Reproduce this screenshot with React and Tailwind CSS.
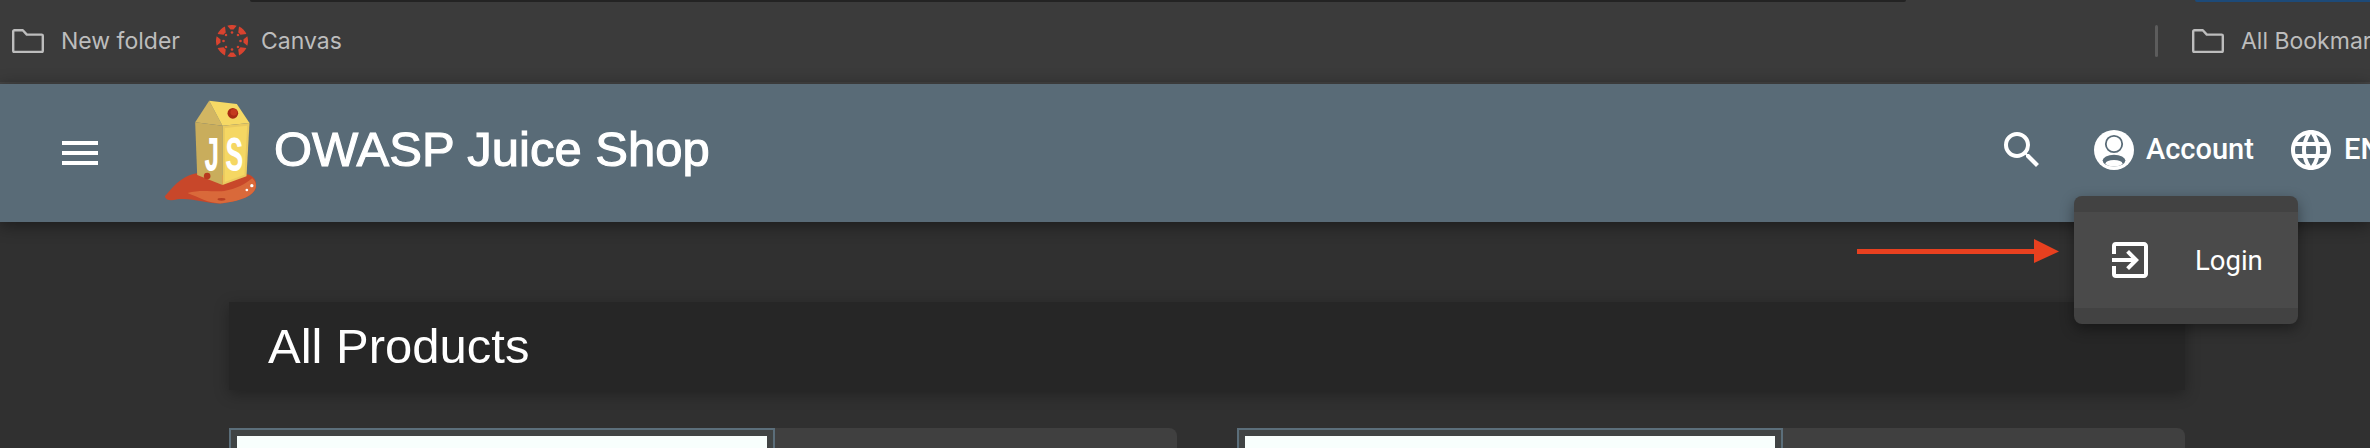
import React from 'react';
import { MdMenu, MdSearch, MdLanguage, MdExitToApp } from 'react-icons/md';

const FolderIcon = ({ className }) => (
  <svg viewBox="0 0 32 24" className={className} fill="none" stroke="#bdbdbd" strokeWidth="2.4" strokeLinejoin="round">
    <path d="M1.2 2.4 a1.2 1.2 0 0 1 1.2-1.2 h8.4 l4 4.4 h14.8 a1.2 1.2 0 0 1 1.2 1.2 v15 a1.2 1.2 0 0 1 -1.2 1.2 h-27.2 a1.2 1.2 0 0 1 -1.2-1.2 z" />
  </svg>
);

// sector of the ring, angle in degrees from north
const sector = (a, half, r1, r2) => {
  const pt = (deg, r) => {
    const t = ((deg - 90) * Math.PI) / 180;
    return `${(16 + r * Math.cos(t)).toFixed(2)} ${(16 + r * Math.sin(t)).toFixed(2)}`;
  };
  return `M${pt(a - half, r2)} A${r2} ${r2} 0 0 1 ${pt(a + half, r2)} L${pt(a + half * 0.45, r1)} A${r1} ${r1} 0 0 0 ${pt(a - half * 0.45, r1)} Z`;
};

const CanvasLogo = () => (
  <svg viewBox="0 0 32 32" className="w-8 h-8 shrink-0" fill="#d8432f">
    {[0, 45, 90, 135, 180, 225, 270, 315].map((a) => (
      <path key={a} d={sector(a, a % 90 === 0 ? 17 : 19, a % 90 === 0 ? 11.5 : 10.5, 16)} />
    ))}
    {[0, 45, 90, 135, 180, 225, 270, 315].map((a) => {
      const t = ((a - 90) * Math.PI) / 180;
      return <circle key={a} cx={16 + 8.5 * Math.cos(t)} cy={16 + 8.5 * Math.sin(t)} r="1.3" />;
    })}
  </svg>
);

const JuiceLogo = () => (
  <svg viewBox="40 30 275 315" className="w-[92px] h-[105px] shrink-0">
    <path d="M42 322 C60 300 90 262 130 254 C170 248 230 268 290 256 C314 262 322 285 312 304 C298 328 250 338 215 343 C170 346 130 326 80 331 C60 336 44 335 42 322 Z" fill="#c8472a" />
    <path d="M110 312 C150 300 190 310 220 306 C255 300 285 285 304 268 C318 280 318 294 310 306 C296 328 250 338 215 343 C175 345 145 325 110 312 Z" fill="#d9693a" />
    <ellipse cx="212" cy="331" rx="12" ry="4" fill="#b63f24" />
    <polygon points="175,35 215,110 133,100" fill="#d2b662" />
    <polygon points="175,35 258,45 296,102 215,110" fill="#f6d965" />
    <polygon points="133,100 215,110 215,288 139,258" fill="#c9ad5c" />
    <polygon points="215,110 296,102 287,262 215,288" fill="#e9c95f" />
    <polygon points="222,117 289,110 281,257 222,279" fill="#f5d763" />
    <circle cx="246" cy="73" r="16" fill="#a82b14" />
    <circle cx="249" cy="70" r="10" fill="#c43a1e" />
    <text x="158" y="245" textLength="50" lengthAdjust="spacingAndGlyphs" fontFamily="Liberation Mono, monospace" fontWeight="700" fontSize="150" fill="#ffffff">J</text>
    <text x="224" y="247" textLength="53" lengthAdjust="spacingAndGlyphs" fontFamily="Liberation Mono, monospace" fontWeight="700" fontSize="150" fill="#ffffff">S</text>
    <circle cx="169" cy="261" r="10" fill="#b8391f" />
    <circle cx="303" cy="290" r="5" fill="#ffffff" />
    <circle cx="288" cy="303" r="4" fill="#ffffff" />
  </svg>
);

const AccountIcon = () => (
  <svg viewBox="0 0 24 24" className="w-12 h-12 shrink-0">
    <circle cx="12" cy="12" r="10" fill="#ffffff" />
    <circle cx="12" cy="9" r="4.1" fill="#ffffff" stroke="#596b77" strokeWidth="0.9" />
    <ellipse cx="12" cy="17.3" rx="5.7" ry="2.9" fill="#596b77" />
    <ellipse cx="12" cy="18.6" rx="4.2" ry="1.6" fill="#ffffff" />
  </svg>
);

const App = () => {
  return (
    <div className="relative w-[2370px] h-[448px] overflow-hidden flex flex-col bg-[#303030] font-['Roboto',sans-serif]">
      {/* Browser bookmarks bar */}
      <div className="relative h-[84px] shrink-0 flex items-center bg-[#3b3b3b] border-b-2 border-[#454545] pl-3 font-['Inter',sans-serif] text-[23px] text-[#bdbdbd] whitespace-nowrap">
        <div className="absolute left-[250px] top-0 w-[1656px] h-[2px] bg-[#232323] rounded-b" />
        <div className="absolute left-[2195px] top-0 right-0 h-[2px] bg-[#1d4a78] rounded-bl" />
        <FolderIcon className="w-8 h-6 shrink-0" />
        <span className="ml-[17px] w-[120px] shrink-0">New folder</span>
        <div className="ml-[35px]"><CanvasLogo /></div>
        <span className="ml-[13px] w-[81px] shrink-0">Canvas</span>
        <div className="ml-[1813px] w-[3px] h-8 rounded bg-[#5c5c5c] shrink-0" />
        <FolderIcon className="ml-[34px] w-8 h-6 shrink-0" />
        <span className="ml-[17px] shrink-0">All Bookmarks</span>
      </div>

      {/* App toolbar */}
      <header className="relative z-10 h-[138px] shrink-0 flex items-center bg-[#596b77] pl-14 pb-1 text-white whitespace-nowrap shadow-[0_3px_16px_rgba(0,0,0,0.45)]">
        <MdMenu className="w-12 h-12 shrink-0 mt-1" />
        <div className="ml-[60px]"><JuiceLogo /></div>
        <span className="ml-[18px] w-[436px] shrink-0 -mt-[2px] font-['Liberation_Sans',sans-serif] text-[49px] font-medium [-webkit-text-stroke:1.1px_white]">OWASP Juice Shop</span>
        <MdSearch className="ml-[1288px] w-12 h-12 shrink-0 -mt-[2px]" />
        <div className="ml-11 -mt-[2px]"><AccountIcon /></div>
        <span className="ml-2 w-[108px] shrink-0 -mt-[2px] text-[29px] font-medium">Account</span>
        <MdLanguage className="ml-[33px] w-12 h-12 shrink-0 -mt-[2px]" />
        <span className="ml-[9px] -mt-[2px] text-[29px] font-medium">EN</span>
      </header>

      {/* Page content */}
      <main className="flex-1 pl-[229px] pt-20">
        <div className="w-[1956px] h-[88px] flex items-center pl-[39px] pt-[2px] bg-[#262626] shadow-[0_4px_14px_rgba(0,0,0,0.3)]">
          <h1 className="font-['Liberation_Sans',sans-serif] text-[49px] text-white">All Products</h1>
        </div>
        <div className="mt-[38px] flex gap-[60px]">
          <div className="w-[948px] h-[60px] flex bg-[#404040] rounded-tr-lg">
            <div className="w-[546px] h-full border-2 border-[#5b6e7a] bg-[#404444] pt-[6px] px-[6px]">
              <div className="h-full bg-[#f8fffd]" />
            </div>
          </div>
          <div className="w-[948px] h-[60px] flex bg-[#404040] rounded-tr-lg">
            <div className="w-[546px] h-full border-2 border-[#5b6e7a] bg-[#404444] pt-[6px] px-[6px]">
              <div className="h-full bg-[#f8fffd]" />
            </div>
          </div>
        </div>
      </main>

      {/* Account menu */}
      <div className="absolute z-20 left-[2074px] top-[196px] w-[224px] h-[128px] flex flex-col rounded-lg overflow-hidden bg-[#424242] py-4 shadow-[0_5px_14px_rgba(0,0,0,0.4)]">
        <div className="flex-1 flex items-center pl-8 bg-[#4a4a4a] text-white">
          <MdExitToApp className="w-12 h-12 shrink-0" />
          <span className="ml-[41px] mt-[2px] text-[27.5px]">Login</span>
        </div>
      </div>

      {/* Annotation arrow */}
      <svg className="absolute z-30 left-[1857px] top-[239px] w-[202px] h-6" viewBox="0 0 202 24">
        <rect x="0" y="10" width="180" height="5" fill="#e8401f" />
        <polygon points="177,0 202,12.5 177,24" fill="#e8401f" />
      </svg>
    </div>
  );
};

export default App;
